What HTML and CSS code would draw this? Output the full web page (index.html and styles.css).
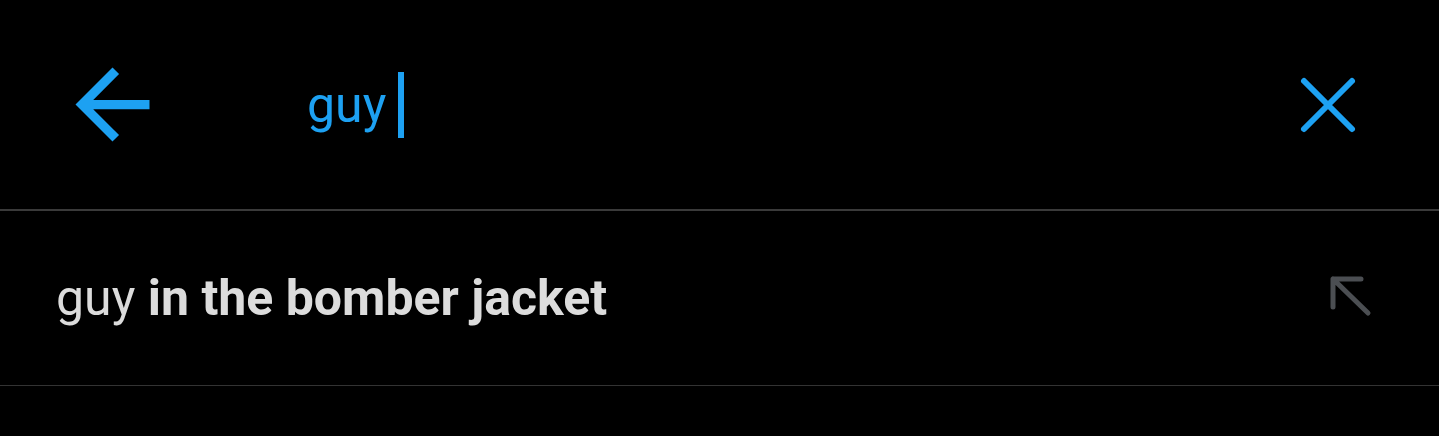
FILE: index.html
```html
<!DOCTYPE html>
<html lang="en">
<head>
    <meta charset="UTF-8">
    <meta name="viewport" content="width=device-width, initial-scale=1.0">
    <title>Search</title>
    <link rel="stylesheet" href="styles.css">
</head>
<body>

    <header class="search-bar">
        <svg class="back" viewBox="0 0 24 24">
            <path d="M20 11H7.83l5.59-5.59L12 4l-8 8 8 8 1.41-1.41L7.83 13H20v-2z"/>
        </svg>
        <div class="query">
            <span>guy</span><span class="caret"></span>
        </div>
        <svg class="close" viewBox="0 0 58 58">
            <path d="M5 5L53 53M53 5L5 53"/>
        </svg>
    </header>

    <ul class="suggestions">
        <li>
            <span class="text">guy <b>in the bomber jacket</b></span>
            <svg class="fill-in" viewBox="0 0 48 48">
                <path d="M8 8H36M8 8V36M8 8L43 42"/>
            </svg>
        </li>
    </ul>

</body>
</html>
```

FILE: styles.css
```css
body {
    margin: 0;
    padding: 0;
    background-color: #000;
    font-family: Roboto, 'Noto Sans', sans-serif;
}

.search-bar {
    display: flex;
    align-items: center;
    height: 209px;
    border-bottom: 2px solid #3a3a3a;
}

.back {
    width: 111px;
    height: 111px;
    margin-left: 57px;
    fill: #1da1f2;
}

.query {
    display: flex;
    align-items: center;
    margin-left: 139px;
    font-size: 50px;
    color: #1da1f2;
}

.caret {
    display: inline-block;
    width: 6px;
    height: 66px;
    margin-left: 12px;
    background-color: #1da1f2;
}

.close {
    width: 58px;
    height: 58px;
    margin-left: auto;
    margin-right: 82px;
    fill: none;
    stroke: #1da1f2;
    stroke-width: 6;
    stroke-linecap: round;
}

.suggestions {
    list-style: none;
    margin: 0;
    padding: 0;
}

.suggestions li {
    display: flex;
    align-items: center;
    height: 174px;
    border-bottom: 1px solid #333;
}

.suggestions .text {
    padding-left: 56px;
    font-size: 50px;
    color: #dcdcdc;
}

.suggestions b {
    font-weight: bold;
}

.fill-in {
    width: 48px;
    height: 48px;
    margin-left: auto;
    margin-right: 66px;
    margin-bottom: 6px;
    fill: none;
    stroke: #4b4e52;
    stroke-width: 5;
    stroke-linecap: round;
}
```
